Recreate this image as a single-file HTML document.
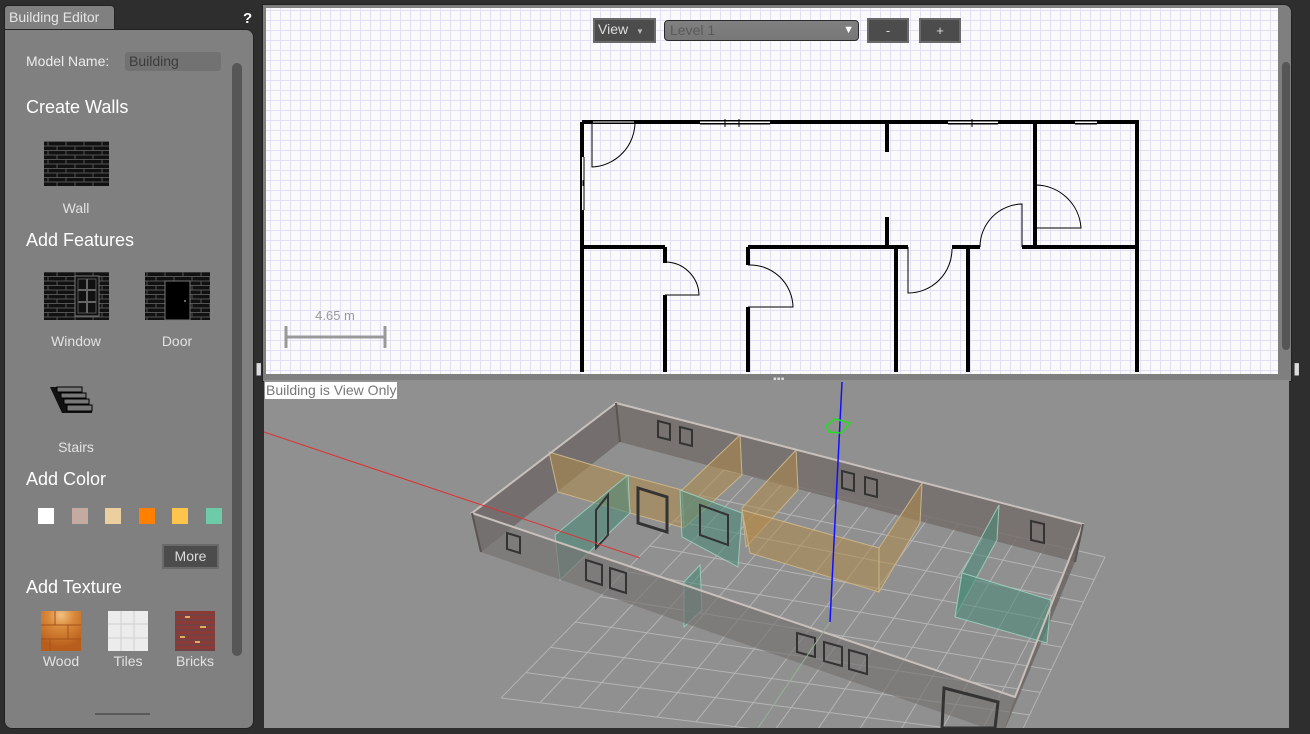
<!DOCTYPE html>
<html><head><meta charset="utf-8">
<style>
*{margin:0;padding:0;box-sizing:border-box}
body{width:1310px;height:734px;background:#2e2e2e;font-family:"Liberation Sans","DejaVu Sans",sans-serif;position:relative;overflow:hidden}
.a{position:absolute}
.lbl{color:#e2e2e2;font-size:14px;text-align:center;width:80px}
.h{color:#fff;font-size:18px;left:26px}
</style></head><body>
<!-- left panel -->
<div class="a" style="left:4px;top:5px;width:111px;height:28px;background:#808080;border-radius:4px 4px 0 0;border:1px solid #222;border-bottom:none"></div>
<div class="a" style="left:9px;top:9px;color:#e6e6e6;font-size:14px">Building Editor</div>
<div class="a" style="left:243px;top:10px;color:#fff;font-size:15px;font-weight:bold">?</div>
<div class="a" style="left:4px;top:29px;width:250px;height:700px;background:#808080;border-radius:0 8px 8px 8px;border:1px solid #222"></div>
<div class="a" style="left:26px;top:53px;color:#ececec;font-size:14px">Model Name:</div>
<div class="a" style="left:125px;top:52px;width:96px;height:19px;background:#727272;border-radius:3px;color:#3c3c3c;font-size:14px;padding:1px 4px">Building</div>
<div class="a" style="left:232px;top:63px;width:10px;height:593px;background:#565656;border-radius:5px"></div>
<div class="a h" style="top:97px">Create Walls</div>
<svg class="a" style="left:0;top:0" width="260" height="734">
<defs>
<pattern id="br" x="44" y="141" width="18" height="9" patternUnits="userSpaceOnUse">
<rect width="18" height="9" fill="#111"/>
<path d="M0 0.5H18M0 5H18M4 0V4.5M13 4.5V9" stroke="#555" stroke-width="1"/>
</pattern>
</defs>
<rect x="44" y="141" width="65" height="45" fill="url(#br)"/>
<rect x="44" y="272" width="65" height="48" fill="url(#br)"/>
<rect x="75" y="276" width="24" height="40" fill="#111" stroke="#777" stroke-width="1"/>
<rect x="78" y="279" width="18" height="34" fill="#111" stroke="#555"/>
<path d="M87 279V313M78 290H96M78 302H96" stroke="#666" stroke-width="2"/>
<rect x="145" y="272" width="65" height="48" fill="url(#br)"/>
<rect x="165" y="281" width="25" height="39" fill="#000" stroke="#777"/>
<circle cx="185" cy="301" r="1" fill="#888"/>
<path d="M50 387H82V393H86V399H89V405H92V413H62Z" fill="#111"/>
<rect x="57" y="387" width="25" height="5" fill="#777" stroke="#000"/>
<rect x="61" y="393" width="25" height="5" fill="#777" stroke="#000"/>
<rect x="64" y="399" width="25" height="5" fill="#777" stroke="#000"/>
<rect x="67" y="405" width="25" height="6" fill="#777" stroke="#000"/>
<rect x="38" y="508" width="16" height="16" fill="#fff"/>
<rect x="72" y="508" width="16" height="16" fill="#c4aaa1"/>
<rect x="105" y="508" width="16" height="16" fill="#ebcf9e"/>
<rect x="139" y="508" width="16" height="16" fill="#ff7f00"/>
<rect x="172" y="508" width="16" height="16" fill="#ffc44b"/>
<rect x="206" y="508" width="16" height="16" fill="#6dcbaa"/>
<defs>
<radialGradient id="wd" cx="0.5" cy="0.1" r="0.8"><stop offset="0" stop-color="#f2c080"/><stop offset="0.4" stop-color="#d98a3a"/><stop offset="1" stop-color="#b85e1c"/></radialGradient>
</defs>
<rect x="41" y="611" width="40" height="40" fill="url(#wd)"/>
<path d="M41 625H81M41 639H81M55 611V625M68 625V639M50 639V651" stroke="#a5521a" stroke-width="1"/>
<rect x="108" y="611" width="40" height="40" fill="#ececec"/>
<path d="M108 624H148M108 638H148M121 611V651M134 611V651" stroke="#d0d0d0"/>
<rect x="175" y="611" width="40" height="40" fill="#8c3a35"/>
<path d="M175 615H215M175 620H215M175 625H215M175 630H215M175 635H215M175 640H215M175 645H215M175 650H215" stroke="#5a4a55" stroke-width="1"/>
<path d="M185 617h5M200 627h6M180 637h5M195 642h5" stroke="#d8b060" stroke-width="2"/>
<rect x="95" y="713" width="55" height="2" fill="#5a5a5a"/>
</svg>
<div class="a lbl" style="left:36px;top:200px">Wall</div>
<div class="a h" style="top:230px">Add Features</div>
<div class="a lbl" style="left:36px;top:333px">Window</div>
<div class="a lbl" style="left:137px;top:333px">Door</div>
<div class="a lbl" style="left:36px;top:439px">Stairs</div>
<div class="a h" style="top:469px">Add Color</div>
<div class="a" style="left:162px;top:544px;width:57px;height:25px;background:#4c4c4c;border:2px solid #6a6a6a;color:#ddd;font-size:14px;text-align:center;line-height:21px">More</div>
<div class="a h" style="top:577px">Add Texture</div>
<div class="a lbl" style="left:21px;top:653px">Wood</div>
<div class="a lbl" style="left:88px;top:653px">Tiles</div>
<div class="a lbl" style="left:155px;top:653px">Bricks</div>

<!-- 2D panel -->
<div class="a" style="left:262px;top:4px;width:1030px;height:378px;background:#7f7f7f;border-radius:0 8px 0 0;border:1px solid #222"></div>
<div class="a" style="left:266px;top:8px;width:1012px;height:366px;background-color:#fafafa;background-image:linear-gradient(90deg,#e3e0f5 1px,transparent 1px),linear-gradient(#e3e0f5 1px,transparent 1px);background-size:10px 10px;background-position:4px 2px"></div>
<div class="a" style="left:1282px;top:62px;width:8px;height:288px;background:#565656;border-radius:4px"></div>
<svg class="a" style="left:0;top:0" width="1290" height="376">
<g stroke="#000" fill="none">
<path d="M582 122H1137V372M582 122V372M582 247H665M748 247H908M952 247H980M1022 247H1137M665 247V263M665 295V372M748 247V265M748 307V372M896 247V372M968 247V372M887 122V152M887 217V247M1035 122V247" stroke-width="4"/>
</g>
<g stroke="#fafafa" stroke-width="2"><path d="M593 122H634M583 157V210M700 122H770M948 122H998M1075 122H1097M608 372H630M790 372H840M1028 372H1080"/></g>
<g stroke="#000" stroke-width="1" fill="none">
<path d="M700 121H770M700 124H770M948 121H998M948 124H998M1075 121H1097M1075 124H1097M581 157V210M584 157V210M725 119V127M739 119V127M972 119V127M583 180v6"/>
<path d="M592 122V167A45 45 0 0 0 635 122H592"/>
<path d="M665 295H699A34 34 0 0 0 665 262"/>
<path d="M748 307H793A43 43 0 0 0 748 265"/>
<path d="M908 247V293A44 44 0 0 0 952 249"/>
<path d="M1022 247V204A43 43 0 0 0 980 247"/>
<path d="M1035 228H1081A46 46 0 0 0 1035 185"/>
</g>
<text x="335" y="320" font-size="13" fill="#999" text-anchor="middle" font-family="Liberation Sans">4.65 m</text>
<path d="M286 337H385M286 326V348M385 326V348" stroke="#999" stroke-width="3"/>
</svg>
<div class="a" style="left:593px;top:18px;width:63px;height:25px;background:#4c4c4c;border:2px solid #6a6a6a;color:#ddd;font-size:14px;padding:1px 0 0 3px">View <span style="font-size:8px;color:#bbb;margin-left:4px">▼</span></div>
<div class="a" style="left:664px;top:20px;width:195px;height:21px;background:linear-gradient(#808080,#777);border:1px solid #2a2a2a;border-radius:4px;color:#5a5a5a;font-size:14px;padding:1px 5px">Level 1<span style="position:absolute;right:4px;top:3px;color:#fff;font-size:11px">▼</span></div>
<div class="a" style="left:867px;top:18px;width:42px;height:25px;background:#4c4c4c;border:2px solid #6a6a6a;color:#ddd;font-size:13px;text-align:center;line-height:21px">-</div>
<div class="a" style="left:919px;top:18px;width:42px;height:25px;background:#4c4c4c;border:2px solid #6a6a6a;color:#ddd;font-size:13px;text-align:center;line-height:21px">+</div>
<div class="a" style="left:256px;top:363px;color:#ddd;font-size:9px;line-height:4px">■<br>■<br>■</div>
<div class="a" style="left:1294px;top:363px;color:#ddd;font-size:9px;line-height:4px">■<br>■<br>■</div>
<div class="a" style="left:773px;top:376px;color:#ddd;font-size:7px">▮▮▮</div>

<!-- 3D view -->
<svg class="a" style="left:264px;top:380px" width="1025" height="348" viewBox="264 380 1025 348">
<rect x="264" y="380" width="1025" height="348" fill="#909090"/>
<g id="grid" stroke="#b4b4b4" stroke-width="1" fill="none"></g>
<polygon points="616,403 1083,524 1075,562 620,442" fill="#746d6b" fill-opacity="0.85"/>
<polygon points="472,513 616,403 620,442 481,552" fill="#706a68" fill-opacity="0.85"/>
<polygon points="1083,524 1015,697 1003,734 1075,562" fill="#6a6462" fill-opacity="0.8"/>
<g fill="#b08a4a" fill-opacity="0.55" stroke="#c9b48a" stroke-width="1">
<polygon points="549,452 626,475 630,513 558,492"/>
<polygon points="682,490 740,435 742,475 684,528"/>
<polygon points="742,508 796,450 798,490 746,547"/>
<polygon points="742,510 879,548 879,592 750,553"/>
<polygon points="879,548 922,483 920,523 879,592"/>
<polygon points="626,475 682,490 684,528 630,513"/>
</g>
<g fill="#4f8a78" fill-opacity="0.6" stroke="#9cc8b8" stroke-width="1">
<polygon points="555,535 628,475 630,513 560,580"/>
<polygon points="680,490 742,513 738,567 682,537"/>
<polygon points="684,582 700,565 702,610 684,627"/>
<polygon points="962,573 999,505 997,540 955,617"/>
<polygon points="962,573 1051,600 1047,643 955,617"/>
</g>
<polygon points="472,513 1015,697 1003,734 481,552" fill="#757070" fill-opacity="0.65"/>
<path d="M472,513 L616,403 L1083,524 L1015,697 Z" stroke="#c8c0bc" stroke-width="2" fill="none"/>
<path d="M616,403 620,442 M472,513 481,552 M1083,524 1075,562" stroke="#5a5452" stroke-width="2"/>
<g fill="none" stroke="#333" stroke-width="2">
<polygon points="658,421 670,424 670,440 658,437"/>
<polygon points="680,427 692,430 692,446 680,443"/>
<polygon points="842,471 854,474 854,491 842,488"/>
<polygon points="865,477 877,480 877,497 865,494"/>
<polygon points="1031,521 1044,524 1044,543 1031,540"/>
<polygon points="507,533 520,537 520,553 507,549"/>
<polygon points="586,560 602,565 602,585 586,580"/>
<polygon points="610,568 626,573 626,593 610,588"/>
<polygon points="797,633 815,638 815,657 797,652"/>
<polygon points="824,642 842,647 842,666 824,661"/>
<polygon points="849,650 867,655 867,674 849,669"/>
<polygon points="638,488 667,497 667,532 638,523" stroke-width="3"/>
<polygon points="944,688 998,702 995,728 942,728" stroke-width="3"/>
<polygon points="596,510 608,495 608,535 596,548"/>
<polygon points="700,505 728,515 728,545 700,535"/>
</g>
<path d="M264,432 L640,558" stroke="#e03030" stroke-width="1"/>
<path d="M842,382 L830,622" stroke="#1010ff" stroke-width="1.5"/>
<polygon points="826,426 835,419 850,423 841,433 829,432" fill="none" stroke="#20e020" stroke-width="1.5"/>
<path d="M830,622 L758,728" stroke="#99b099" stroke-width="1"/>
</svg>
<div class="a" style="left:265px;top:382px;background:#fff;color:#777;font-size:14px;padding:0 1px;line-height:17px">Building is View Only</div>
<div class="a" style="left:262px;top:728px;width:1030px;height:6px;background:#2e2e2e"></div>
<script>
(function(){
var g=document.getElementById('grid');var BL=[501,698],TL=[724,470],TR=[1105,557],BR=[1008,760];
function P(u,v){var a=[BL[0]+(BR[0]-BL[0])*u,BL[1]+(BR[1]-BL[1])*u],b=[TL[0]+(TR[0]-TL[0])*u,TL[1]+(TR[1]-TL[1])*u];return [a[0]+(b[0]-a[0])*v,a[1]+(b[1]-a[1])*v];}
var s='';var NU=13,NV=9;
for(var i=0;i<=NU;i++){var p=P(i/NU,0),q=P(i/NU,1);s+='M'+p[0]+' '+p[1]+'L'+q[0]+' '+q[1];}
for(var j=0;j<=NV;j++){var p=P(0,j/NV),q=P(1,j/NV);s+='M'+p[0]+' '+p[1]+'L'+q[0]+' '+q[1];}
var e=document.createElementNS('http://www.w3.org/2000/svg','path');e.setAttribute('d',s);g.appendChild(e);
})();
</script>
</body></html>
